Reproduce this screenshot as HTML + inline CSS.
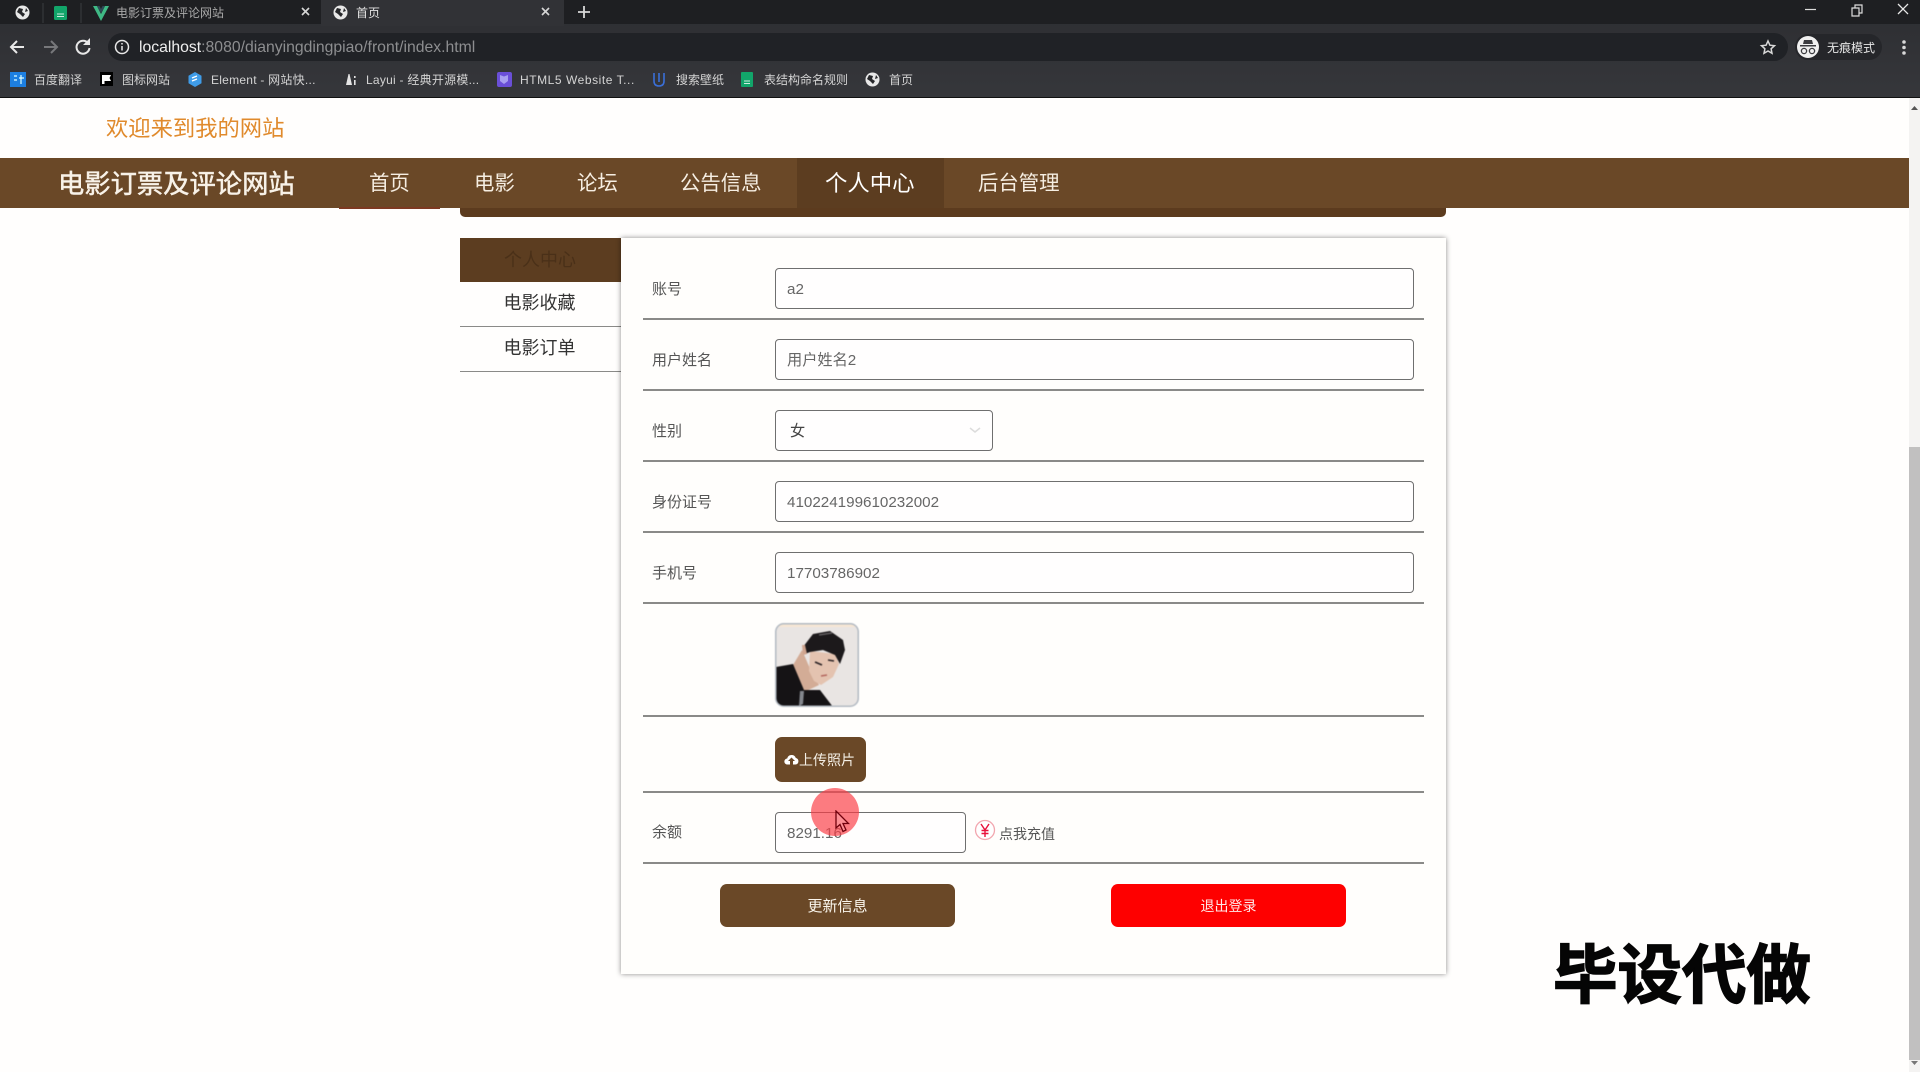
<!DOCTYPE html>
<html lang="zh"><head><meta charset="utf-8"><title>首页</title>
<style>
*{box-sizing:border-box}
html,body{margin:0;padding:0;width:1920px;height:1072px;overflow:hidden;background:#fffefd;font-family:"Liberation Sans","Noto Sans CJK SC",sans-serif}
.a{position:absolute;white-space:nowrap}
.chrome{color:#d4d4d4;font-size:12px;line-height:16px}
.ln{position:absolute;left:643px;width:781px;height:2px;background:#8a8a88}
.lb{position:absolute;left:652px;font-size:15px;line-height:20px;color:#555;white-space:nowrap}
.in{position:absolute;left:775px;width:639px;height:40.500px;border:1.5px solid #6f6f6f;border-radius:4px;background:#fffefe;font-size:15.200px;line-height:41px;padding-left:11px;color:#666;white-space:nowrap}
.nv{position:absolute;top:171px;font-size:20.400px;line-height:26px;color:#f6eee2;white-space:nowrap}
</style></head><body>

<!-- browser chrome -->
<div class="a" style="left:0;top:0;width:1920px;height:98px;background:linear-gradient(#2c2d31,#36373b)"></div>
<div class="a" style="left:0;top:0;width:1920px;height:24px;background:#1e1f22"></div>
<div class="a" style="left:321px;top:0;width:243px;height:26px;background:#313236"></div>
<div class="a" style="left:0;top:97px;width:1920px;height:1px;background:#111"></div>
<div class="a" style="left:108px;top:33px;width:1680px;height:28px;background:#202226;border-radius:14px"></div>
<div class="a" style="left:1795px;top:34px;width:87px;height:26px;background:#25262a;border-radius:13px"></div>

<svg class="a" style="left:0;top:0" width="1920" height="98" viewBox="0 0 1920 98">
 <g fill="#e8e8e8">
  <circle cx="22.500" cy="12.500" r="7"/><circle cx="340.500" cy="12.500" r="7"/><circle cx="872.500" cy="79.500" r="7"/>
 </g>
 <g fill="#26272a">
  <path d="M19 8l4 1-1 3 3 2-2 3-3-3-3-2z"/><path d="M26 8l2 3-3 1z"/>
  <path d="M337 8l4 1-1 3 3 2-2 3-3-3-3-2z"/><path d="M344 8l2 3-3 1z"/>
  <path d="M869 75l4 1-1 3 3 2-2 3-3-3-3-2z"/><path d="M876 75l2 3-3 1z"/>
 </g>
 <path d="M43 3v20M81 3v20" stroke="#3b3c40" stroke-width="1"/>
 <rect x="54" y="6" width="13" height="14" rx="1.500" fill="#12a56a"/><path d="M57 14h7M57 16.500h7" stroke="#cdeee0" stroke-width="1"/>
 <path d="M93 6l8 15 8-15h-4l-4 8-4-8z" fill="#3fb985"/><path d="M97 6l4 7 4-7h-2.500l-1.500 3-1.500-3z" fill="#2f4a57"/>
 <path d="M302 8l7 7M309 8l-7 7M542 8l7 7M549 8l-7 7" stroke="#d6d6d6" stroke-width="1.600"/>
 <path d="M584 6v12M578 12h12" stroke="#d8d8d8" stroke-width="1.800"/>
 <!-- nav -->
 <path d="M24 47H12M17 41l-6 6 6 6" fill="none" stroke="#e8e8e8" stroke-width="2"/>
 <path d="M44 47h12M51 41l6 6-6 6" fill="none" stroke="#77787b" stroke-width="2"/>
 <path d="M88 43a6.500 6.500 0 1 0 1.500 5" fill="none" stroke="#e8e8e8" stroke-width="2"/><path d="M90 38v7h-7z" fill="#e8e8e8"/>
 <circle cx="122" cy="47" r="6.500" fill="none" stroke="#e8e8e8" stroke-width="1.500"/><path d="M122 46v4.500M122 43v1.500" stroke="#e8e8e8" stroke-width="1.500"/>
 <!-- star -->
 <path d="M1768 41l1.900 4.200 4.600.5-3.400 3.100.9 4.500-4-2.300-4 2.300.9-4.500-3.400-3.100 4.600-.5z" fill="none" stroke="#d8d8d8" stroke-width="1.500"/>
 <!-- incognito -->
 <circle cx="1808" cy="47" r="11" fill="#f0f0f0"/>
 <path d="M1803 44l1-4h8l1 4zM1800 45h16v1.500h-16z" fill="#3a3b3f"/>
 <circle cx="1804" cy="51" r="2.600" fill="none" stroke="#3a3b3f" stroke-width="1.300"/><circle cx="1812" cy="51" r="2.600" fill="none" stroke="#3a3b3f" stroke-width="1.300"/>
 <g fill="#d8d8d8"><circle cx="1904" cy="42" r="1.800"/><circle cx="1904" cy="47.500" r="1.800"/><circle cx="1904" cy="53" r="1.800"/></g>
 <!-- window -->
 <path d="M1805 9.500h11" stroke="#ddd" stroke-width="1.200"/>
 <path d="M1852 8h7v8h-7zM1855 8V5h7v8h-3" fill="none" stroke="#ddd" stroke-width="1.200"/>
 <path d="M1898 4l10 10M1908 4l-10 10" stroke="#e8e8e8" stroke-width="1.300"/>
 <!-- bookmark icons -->
 <rect x="10" y="72" width="16" height="15" fill="#1d7fe0"/><path d="M14 76h3M14 80h3M21 75v9M19 78h5" stroke="#dff" stroke-width="1.200"/>
 <path d="M100 72h13v14h-13z" fill="#000"/><path d="M102 75h9l-1.500 3 1.500 3h-6.500v3h-2.500z" fill="#fff"/>
 <path d="M195 72l6.500 3.700v7.600l-6.500 3.700-6.500-3.700v-7.600z" fill="#3f9ce8"/><path d="M192 78l5-2M192 81l5-2" stroke="#fff" stroke-width="1.300"/>
 <path d="M346 85l2.500-11h1l2.500 11zM354 76h1.600v2h-1.600zM354 80h1.600v5h-1.600z" fill="#e4e4e4"/>
 <rect x="497" y="72" width="15" height="15" rx="2" fill="#6a4fd8"/><path d="M500 75l4 1.500 4-1.500v6l-4 3-4-3z" fill="#a8a0f0"/>
 <path d="M654 73v8q0 5 5 5t5-5v-8M659 73v9" fill="none" stroke="#3a6fd8" stroke-width="1.600"/>
 <rect x="741" y="72" width="12" height="15" rx="1" fill="#12a56a"/><path d="M744 81h6M744 83.500h6" stroke="#cdeee0" stroke-width="1"/>
</svg>

<div class="a chrome" style="left:116px;top:4.500px;color:#a9a9a9">电影订票及评论网站</div>
<div class="a chrome" style="left:356px;top:4.500px;color:#e2e2e2">首页</div>
<div class="a" style="left:139px;top:37.500px;font-size:15.750px;line-height:20px;color:#eee">localhost<span style="color:#8d8e90">:8080/dianyingdingpiao/front/index.html</span></div>
<div class="a chrome" style="left:1827px;top:39.500px;color:#e6e6e6">无痕模式</div>
<div class="a chrome" style="left:34px;top:72px">百度翻译</div>
<div class="a chrome" style="left:122px;top:72px">图标网站</div>
<div class="a chrome" style="left:211px;top:72px;letter-spacing:.25px">Element - 网站快...</div>
<div class="a chrome" style="left:366px;top:72px;letter-spacing:.25px">Layui - 经典开源模...</div>
<div class="a chrome" style="left:520px;top:72px;letter-spacing:.55px">HTML5 Website T...</div>
<div class="a chrome" style="left:676px;top:72px">搜索壁纸</div>
<div class="a chrome" style="left:764px;top:72px">表结构命名规则</div>
<div class="a chrome" style="left:889px;top:72px">首页</div>

<!-- scrollbar -->
<div class="a" style="left:1909px;top:98px;width:11px;height:974px;background:#f4f3f2"></div>
<div class="a" style="left:1909px;top:447px;width:11px;height:613px;background:#c1c0c0"></div>
<svg class="a" style="left:1909px;top:100px" width="11" height="972"><path d="M2 10l3.500-4 3.500 4z" fill="#555"/><path d="M2 961l3.500 4 3.500-4z" fill="#777"/></svg>

<!-- site header -->
<div class="a" style="left:106px;top:115px;font-size:22.300px;line-height:28px;color:#e08a2c">欢迎来到我的网站</div>
<div class="a" style="left:460px;top:200px;width:986px;height:17px;background:#5c3b1e;border-radius:0 0 5px 5px"></div>
<div class="a" style="left:0;top:158px;width:1909px;height:50px;background:#6a4827"></div>
<div class="a" style="left:339px;top:206.500px;width:101px;height:2.500px;background:#7d3a22"></div>
<div class="a" style="left:797px;top:158px;width:147px;height:50px;background:#5c3d20"></div>
<div class="a" style="left:58px;top:167px;font-size:26.300px;line-height:34px;color:#f8f2e8;-webkit-text-stroke:.5px #f8f2e8">电影订票及评论网站</div>
<div class="nv" style="left:369px">首页</div>
<div class="nv" style="left:474px">电影</div>
<div class="nv" style="left:577px">论坛</div>
<div class="nv" style="left:680px">公告信息</div>
<div class="nv" style="left:825px;font-size:22.400px;color:#fff">个人中心</div>
<div class="nv" style="left:978px">后台管理</div>

<!-- sidebar -->
<div class="a" style="left:460px;top:238px;width:161px;height:44px;background:#5c3d20;color:#4a3018;font-size:18px;line-height:44px;text-align:center;padding-right:1px">个人中心</div>
<div class="a" style="left:460px;top:282px;width:161px;height:45px;color:#333;font-size:18px;line-height:42px;text-align:center;border-bottom:1.500px solid #8a8a88;padding-right:2px">电影收藏</div>
<div class="a" style="left:460px;top:327px;width:161px;height:45px;color:#333;font-size:18px;line-height:42px;text-align:center;border-bottom:1.500px solid #8a8a88;padding-right:2px">电影订单</div>

<!-- panel -->
<div class="a" style="left:621px;top:238px;width:825px;height:736px;background:#fffefc;box-shadow:0 0 5px rgba(0,0,0,.45)"></div>
<div class="ln" style="top:318px"></div><div class="ln" style="top:389px"></div><div class="ln" style="top:460px"></div><div class="ln" style="top:531px"></div><div class="ln" style="top:602px"></div><div class="ln" style="top:715px"></div><div class="ln" style="top:791px"></div><div class="ln" style="top:862px"></div>

<div class="lb" style="top:279.500px">账号</div>
<div class="in" style="top:268px">a2</div>
<div class="lb" style="top:350.500px">用户姓名</div>
<div class="in" style="top:339px">用户姓名2</div>
<div class="lb" style="top:421.500px">性别</div>
<div class="in" style="top:410px;width:218px;padding-left:14px;color:#444">女</div>
<svg class="a" style="left:968px;top:426px" width="14" height="10"><path d="M2 2l5 4 5-4" fill="none" stroke="#dcdcdc" stroke-width="1.500"/></svg>
<div class="lb" style="top:492.500px">身份证号</div>
<div class="in" style="top:481px">410224199610232002</div>
<div class="lb" style="top:563.500px">手机号</div>
<div class="in" style="top:552px">17703786902</div>

<!-- avatar -->
<svg class="a" style="left:775px;top:623px;filter:blur(.5px)" width="84" height="84" viewBox="0 0 84 84">
 <defs><clipPath id="c"><rect x="1" y="1" width="82" height="82" rx="8"/></clipPath></defs>
 <g clip-path="url(#c)">
  <rect width="84" height="84" fill="#e9e5e3"/>
  <rect x="0" y="0" width="84" height="4" fill="#f6e6d4"/>
  <!-- neck -->
  <path d="M18 42L27 27 36 48 44 62 27 70z" fill="#d3ac96"/>
  <!-- face -->
  <path d="M35 28L60 31 64 41 58 54 46 62 39 58 34 48z" fill="#e4c3b0"/>
  <path d="M40 39l7 3M53 37l6 1" stroke="#2a2224" stroke-width="1.600" fill="none"/>
  <path d="M46 53l6-1" stroke="#b4675e" stroke-width="1.500"/>
  <!-- cap -->
  <path d="M28 24L38 11 55 8 68 17 70 27 65 41 60 32 48 27 35 29 30 31z" fill="#1c191b"/>
  <path d="M44 12l13-2" stroke="#6c686a" stroke-width="1.300"/>
  <path d="M27 22l3 0 2 9-4 1z" fill="#cfa48e"/>
  <!-- shirt -->
  <path d="M1 44L18 41 29 67 45 67 58 84H1z" fill="#151315"/>
  <path d="M25 68l4 0-1 13-4 2z" fill="#84878d"/>
 </g>
 <rect x=".75" y=".75" width="82.500" height="82.500" rx="8" fill="none" stroke="#b3bac2" stroke-width="1.500"/>
</svg>

<!-- upload -->
<div class="a" style="left:775px;top:737px;width:91px;height:45px;background:#6a4827;border-radius:7px;color:#f4efe6;font-size:14px;line-height:46px;padding-left:24px">上传照片</div>
<svg class="a" style="left:784px;top:753px" width="15" height="13"><path d="M3.500 11.500a3 3 0 0 1-.3-6A4.500 4.500 0 0 1 11.800 5a3.300 3.300 0 0 1-.3 6.500H9V8h2L7.500 4.500 4 8h2v3.500z" fill="#fff"/></svg>

<!-- balance -->
<div class="lb" style="top:822.500px">余额</div>
<div class="in" style="top:812px;width:191px">8291.16</div>
<svg class="a" style="left:974px;top:819px" width="22" height="22" viewBox="0 0 22 22"><circle cx="11" cy="11" r="9.500" fill="#fff" stroke="#f2a6ae" stroke-width="1.300"/><path d="M7 5l4 6 4-6M11 11v7M7.500 11.500h7M7.500 14.500h7" fill="none" stroke="#e8113a" stroke-width="1.400"/></svg>
<div class="a" style="left:999px;top:823.500px;font-size:14px;line-height:20px;color:#555">点我充值</div>

<!-- buttons -->
<div class="a" style="left:720px;top:884px;width:235px;height:43px;background:#6a4827;border-radius:7px;color:#fbf7ee;font-size:15px;line-height:45px;text-align:center">更新信息</div>
<div class="a" style="left:1111px;top:884px;width:235px;height:43px;background:#fe0000;border-radius:7px;color:#ffe8e8;font-size:14px;line-height:45px;text-align:center">退出登录</div>

<!-- cursor highlight -->
<div class="a" style="left:811px;top:788px;width:48px;height:48px;border-radius:50%;background:rgba(250,60,70,.68)"></div>
<svg class="a" style="left:834px;top:810px" width="16" height="24" viewBox="0 0 16 24"><path d="M2 1v17l4-3.500 3 7 3-1.500-3-6.500h5.500z" fill="#fff" fill-opacity=".15" stroke="#70000c" stroke-width="1.300"/></svg>

<!-- watermark -->
<div class="a" style="left:1553px;top:930px;font-size:64.500px;line-height:80px;font-weight:700;color:#050505;font-family:'Noto Sans CJK SC','WenQuanYi Zen Hei',sans-serif;-webkit-text-stroke:1.500px #050505;letter-spacing:0">毕设代做</div>
</body></html>
